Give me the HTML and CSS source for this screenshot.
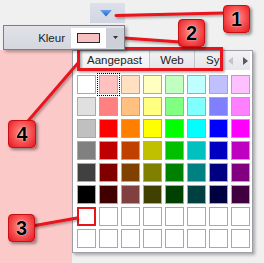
FILE: index.html
```html
<!DOCTYPE html>
<html>
<head>
<meta charset="utf-8">
<link rel="stylesheet" href="styles.css">
</head>
<body>
<div class="screen">
  <div class="toolbar">
    <div class="drop-btn">
      <svg width="12" height="7" viewBox="0 0 12 7"><defs><linearGradient id="bt" x1="0" y1="0" x2="0" y2="1"><stop offset="0" stop-color="#6aa2ee"/><stop offset="1" stop-color="#1f5fcf"/></linearGradient></defs><path d="M0 0 H12 L6 6.5 Z" fill="url(#bt)"/></svg>
    </div>
  </div>
  <div class="prop-row">
    <span class="label">Kleur</span>
    <div class="color-input">
      <span class="swatch-box"><span class="swatch"></span></span>
      <span class="arrow"><svg width="5" height="3" viewBox="0 0 5 3"><path d="M0 0H5L2.5 3Z" fill="#333"/></svg></span>
    </div>
  </div>
  <div class="content">
    <div class="pink"></div>
    <div class="popup">
      <div class="tabbar">
        <div class="tabs">
          <span class="tab active">Aangepast</span>
          <span class="tab web">Web</span>
          <span class="tab sy">Sy</span>
        </div>
        <div class="scroll">
          <svg width="5" height="8" viewBox="0 0 5 8"><path d="M5 0V8L0 4Z" fill="#c4c4c8"/></svg>
          <svg width="5" height="8" viewBox="0 0 5 8"><path d="M0 0V8L5 4Z" fill="#5a5a60"/></svg>
        </div>
      </div>
      <div class="grid">
        <span class="cell" style="background:#ffffff"></span>
        <span class="cell selected" style="background:#ffc0c0"></span>
        <span class="cell" style="background:#ffe0c0"></span>
        <span class="cell" style="background:#ffffc0"></span>
        <span class="cell" style="background:#c0ffc0"></span>
        <span class="cell" style="background:#c0ffff"></span>
        <span class="cell" style="background:#c0c0ff"></span>
        <span class="cell" style="background:#ffc0ff"></span>

        <span class="cell" style="background:#e0e0e0"></span>
        <span class="cell" style="background:#ff8080"></span>
        <span class="cell" style="background:#ffc080"></span>
        <span class="cell" style="background:#ffff80"></span>
        <span class="cell" style="background:#80ff80"></span>
        <span class="cell" style="background:#80ffff"></span>
        <span class="cell" style="background:#8080ff"></span>
        <span class="cell" style="background:#ff80ff"></span>

        <span class="cell" style="background:#c0c0c0"></span>
        <span class="cell" style="background:#ff0000"></span>
        <span class="cell" style="background:#ff8000"></span>
        <span class="cell" style="background:#ffff00"></span>
        <span class="cell" style="background:#00ff00"></span>
        <span class="cell" style="background:#00ffff"></span>
        <span class="cell" style="background:#0000ff"></span>
        <span class="cell" style="background:#ff00ff"></span>

        <span class="cell" style="background:#808080"></span>
        <span class="cell" style="background:#c00000"></span>
        <span class="cell" style="background:#c04000"></span>
        <span class="cell" style="background:#c0c000"></span>
        <span class="cell" style="background:#00c000"></span>
        <span class="cell" style="background:#00c0c0"></span>
        <span class="cell" style="background:#0000c0"></span>
        <span class="cell" style="background:#c000c0"></span>

        <span class="cell" style="background:#404040"></span>
        <span class="cell" style="background:#800000"></span>
        <span class="cell" style="background:#804000"></span>
        <span class="cell" style="background:#808000"></span>
        <span class="cell" style="background:#008000"></span>
        <span class="cell" style="background:#008080"></span>
        <span class="cell" style="background:#000080"></span>
        <span class="cell" style="background:#800080"></span>

        <span class="cell" style="background:#000000"></span>
        <span class="cell" style="background:#400000"></span>
        <span class="cell" style="background:#804040"></span>
        <span class="cell" style="background:#404000"></span>
        <span class="cell" style="background:#004000"></span>
        <span class="cell" style="background:#004040"></span>
        <span class="cell" style="background:#000040"></span>
        <span class="cell" style="background:#400040"></span>

        <span class="cell marked"></span>
        <span class="cell"></span><span class="cell"></span><span class="cell"></span>
        <span class="cell"></span><span class="cell"></span><span class="cell"></span><span class="cell"></span>

        <span class="cell"></span><span class="cell"></span><span class="cell"></span><span class="cell"></span>
        <span class="cell"></span><span class="cell"></span><span class="cell"></span><span class="cell"></span>
      </div>
    </div>
  </div>

  <svg class="annot" width="264" height="263" viewBox="0 0 264 263">
    <defs>
      <filter id="sh" x="-20%" y="-20%" width="140%" height="140%">
        <feDropShadow dx="1.5" dy="1.5" stdDeviation="1" flood-color="#000" flood-opacity="0.35"/>
      </filter>
    </defs>
    <g filter="url(#sh)" stroke="#e8141b" stroke-width="3" fill="none" stroke-linecap="round">
      <rect x="78.5" y="48.5" width="143" height="21"/>
      <line x1="116" y1="15.5" x2="224" y2="13"/>
      <line x1="110" y1="37" x2="180" y2="42"/>
      <line x1="28" y1="121" x2="78" y2="63"/>
      <line x1="35" y1="225.5" x2="77" y2="218"/>
    </g>
  </svg>

  <div class="badge b1">1</div>
  <div class="badge b2">2</div>
  <div class="badge b3">3</div>
  <div class="badge b4">4</div>
</div>
</body>
</html>
```

FILE: styles.css
```css
html, body {
  margin: 0;
  padding: 0;
}
body {
  width: 264px;
  height: 263px;
  overflow: hidden;
  background: #f0f0f0;
  font-family: "Liberation Sans", Arial, sans-serif;
}
.screen {
  position: relative;
  width: 264px;
  height: 263px;
  overflow: hidden;
  background: #f0f0f0;
}
.toolbar {
  height: 25px;
  box-sizing: border-box;
  padding: 3px 0 0 90px;
}
.drop-btn {
  width: 35px;
  height: 20px;
  background: linear-gradient(#dde0ea, #d2d6e2);
  display: flex;
  align-items: center;
  justify-content: center;
  padding-right: 4px;
  box-sizing: border-box;
}
.drop-btn svg { display: block; }

.prop-row {
  margin-left: 3px;
  width: 122px;
  height: 25px;
  box-sizing: border-box;
  border: 1px solid #7d7e86;
  background: linear-gradient(#e2e3e9, #d4d6de);
  display: flex;
  align-items: center;
  box-shadow: 2px 2px 3px rgba(0,0,0,0.3);
  position: relative;
  z-index: 1;
}
.label {
  flex: 1;
  text-align: right;
  padding-right: 6px;
  font-size: 11.5px;
  color: #1a1a1a;
}
.color-input {
  display: flex;
  height: 20px;
  margin-right: 0;
}
.swatch-box {
  width: 35px;
  background: #fff;
  display: flex;
  align-items: center;
  justify-content: center;
  padding-right: 1px;
  box-sizing: border-box;
}
.swatch {
  width: 23px;
  height: 10px;
  box-sizing: border-box;
  background: #f8c0c0;
  border: 1px solid #2a2a2a;
}
.arrow {
  width: 18px;
  background: #cdd0d8;
  display: flex;
  align-items: center;
  justify-content: center;
  padding-bottom: 1px;
  box-sizing: border-box;
}
.arrow svg { display: block; }

.content {
  display: flex;
  height: 213px;
}
.pink {
  width: 72px;
  background: #fcc9c9;
}
.popup {
  width: 181px;
  height: 203px;
  box-sizing: border-box;
  border: 1px solid #9d9ea6;
  background: #ffffff;
  padding: 0 2px 4px 4px;
  box-shadow: 2px 2px 3px rgba(0,0,0,0.3);
}
.tabbar {
  display: flex;
  height: 19px;
  margin-bottom: 5px;
  margin-left: 1px;
}
.tabs {
  width: 147px;
  display: flex;
  overflow: hidden;
}
.tab {
  flex: none;
  box-sizing: border-box;
  height: 19px;
  line-height: 19px;
  font-size: 11.5px;
  color: #222;
  background: linear-gradient(#f2f2f5, #e3e4e9);
  border-right: 1px solid #c3c4cc;
}
.tab.active {
  width: 72px;
  padding-left: 9px;
  background: linear-gradient(#fafafb, #eeeff2);
}
.tab.web {
  width: 45px;
  text-align: center;
}
.tab.sy {
  width: 40px;
  padding-left: 11px;
  border-right: none;
}
.scroll {
  flex: 1;
  display: flex;
  align-items: center;
  justify-content: space-between;
  padding: 0 2px 0 3px;
  background: linear-gradient(#f2f2f5, #e6e7eb);
}
.scroll svg { display: block; }

.grid {
  display: grid;
  grid-template-columns: repeat(8, 19px);
  grid-auto-rows: 19px;
  gap: 3px;
}
.cell {
  box-sizing: border-box;
  border: 1px solid #a8a9b0;
  background: #ffffff;
}
.cell.selected {
  outline: 1px dotted #000;
  outline-offset: 1px;
}
.cell.marked {
  border: 2px solid #e8141b;
}

.annot {
  position: absolute;
  left: 0;
  top: 0;
  pointer-events: none;
}
.badge {
  position: absolute;
  width: 27px;
  height: 28px;
  box-sizing: border-box;
  border: 1px solid #c80f14;
  border-radius: 4px;
  background: radial-gradient(ellipse at 50% 45%, #ff9c9c 0%, #f65a5a 45%, #e8141b 100%);
  box-shadow: 2px 2px 3px rgba(0,0,0,0.4);
  font-weight: bold;
  font-size: 20px;
  line-height: 26px;
  text-align: center;
  color: #000;
  text-shadow: 0 0 1px #fff, 0 0 1px #fff;
}
.b1 { left: 223px; top: 5px; }
.b2 { left: 178px; top: 19px; }
.b3 { left: 8px; top: 214px; }
.b4 { left: 8px; top: 120px; width: 28px; }
```
